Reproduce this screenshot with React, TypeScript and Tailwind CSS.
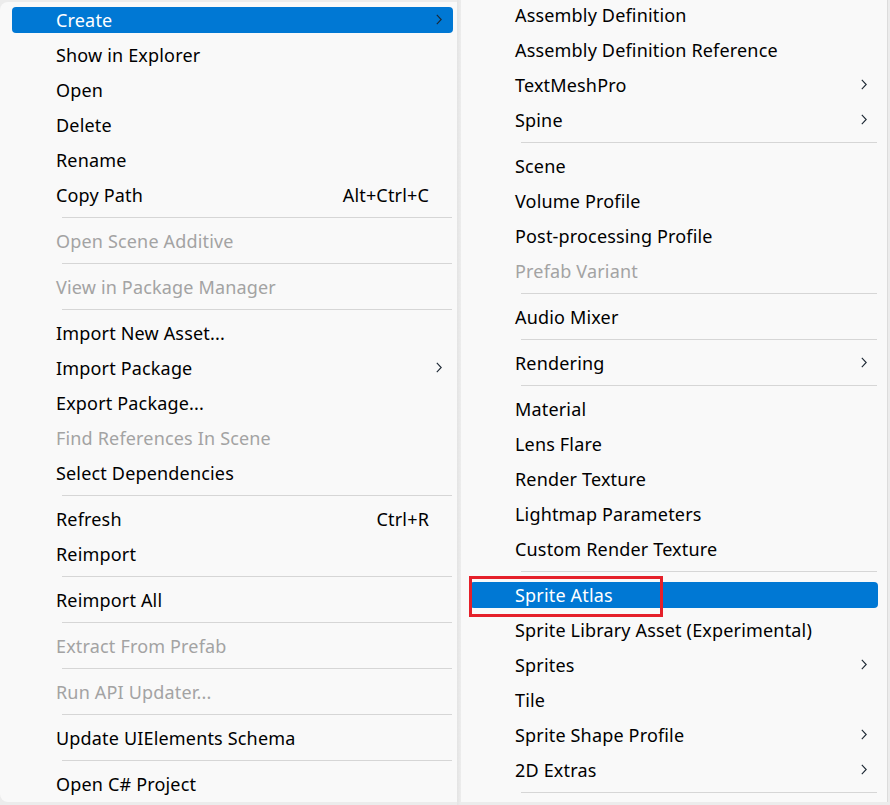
import React from "react";

type Item =
  | { sep: true }
  | { label: string; shortcut?: string; sub?: boolean; disabled?: boolean; hl?: boolean; sep?: false };

const leftItems: Item[] = [
  { label: "Create", sub: true, hl: true },
  { label: "Show in Explorer" },
  { label: "Open" },
  { label: "Delete" },
  { label: "Rename" },
  { label: "Copy Path", shortcut: "Alt+Ctrl+C" },
  { sep: true },
  { label: "Open Scene Additive", disabled: true },
  { sep: true },
  { label: "View in Package Manager", disabled: true },
  { sep: true },
  { label: "Import New Asset..." },
  { label: "Import Package", sub: true },
  { label: "Export Package..." },
  { label: "Find References In Scene", disabled: true },
  { label: "Select Dependencies" },
  { sep: true },
  { label: "Refresh", shortcut: "Ctrl+R" },
  { label: "Reimport" },
  { sep: true },
  { label: "Reimport All" },
  { sep: true },
  { label: "Extract From Prefab", disabled: true },
  { sep: true },
  { label: "Run API Updater...", disabled: true },
  { sep: true },
  { label: "Update UIElements Schema" },
  { sep: true },
  { label: "Open C# Project" },
];

const rightItems: Item[] = [
  { label: "Assembly Definition" },
  { label: "Assembly Definition Reference" },
  { label: "TextMeshPro", sub: true },
  { label: "Spine", sub: true },
  { sep: true },
  { label: "Scene" },
  { label: "Volume Profile" },
  { label: "Post-processing Profile" },
  { label: "Prefab Variant", disabled: true },
  { sep: true },
  { label: "Audio Mixer" },
  { sep: true },
  { label: "Rendering", sub: true },
  { sep: true },
  { label: "Material" },
  { label: "Lens Flare" },
  { label: "Render Texture" },
  { label: "Lightmap Parameters" },
  { label: "Custom Render Texture" },
  { sep: true },
  { label: "Sprite Atlas", hl: true },
  { label: "Sprite Library Asset (Experimental)" },
  { label: "Sprites", sub: true },
  { label: "Tile" },
  { label: "Sprite Shape Profile", sub: true },
  { label: "2D Extras", sub: true },
  { sep: true },
];

function Chevron() {
  return (
    <svg width="6" height="11" viewBox="0 0 6 11" className="shrink-0">
      <path d="M0.8 0.8 L5.2 5.5 L0.8 10.2" fill="none" stroke="#1c2733" strokeWidth="1.1" />
    </svg>
  );
}

function Menu({ items, side }: { items: Item[]; side: "left" | "right" }) {
  const left = side === "left";
  return (
    <div className="flex flex-col">
      {items.map((it, i) => {
        if (it.sep) {
          return (
            <div key={i} className={left ? "h-[11px] pt-[5px] pl-[62px] pr-[5px]" : "h-[11px] pt-[5px] pl-[60px] pr-[10px]"}>
              <div className="h-px bg-[#d6d6d6]" />
            </div>
          );
        }
        return (
          <div key={i} className={left ? "h-[35px] flex items-center pl-[12px] pr-[4px]" : "h-[35px] flex items-center pl-[9px] pr-[9px]"}>
            <div
              className={
                (it.hl ? "bg-[#0078d4] text-white rounded-[4px] " : "") +
                (left ? "flex-1 h-[26px] flex items-center pl-[44px] pr-[11px]" : "flex-1 h-[26px] flex items-center pl-[45px] pr-[11px]")
              }
            >
              <span className={"flex-1 whitespace-nowrap " + (it.disabled ? "text-[#a3a3a3]" : it.hl ? "text-white" : "text-black")}>
                {it.label}
              </span>
              {it.shortcut && <span className="mr-[13px] whitespace-nowrap text-black">{it.shortcut}</span>}
              {it.sub && <Chevron />}
            </div>
          </div>
        );
      })}
    </div>
  );
}

export default function App() {
  return (
    <div
      className="w-[890px] h-[805px] bg-[#ececec] relative overflow-hidden flex text-[18px] leading-none tracking-[0.17px]"
      style={{ fontFamily: '"Noto Sans", "Open Sans", sans-serif' }}
    >
      <div className="w-[457px] h-[800px] mt-[2px] bg-[#f9f9f9] rounded-tl-[8px] rounded-bl-[8px] shrink-0">
        <Menu items={leftItems} side="left" />
      </div>
      <div className="w-[4px] h-[805px] bg-gradient-to-r from-[#e4e4e4] to-[#ededed] shrink-0" />
      <div className="w-[427px] h-[805px] bg-[#f9f9f9] border-r border-[#dcdcdc] -mt-[3px] shrink-0">
        <Menu items={rightItems} side="right" />
      </div>
      <div className="absolute left-[469px] top-[576px] w-[194px] h-[41px] border-[3px] border-[#e5202a]" />
    </div>
  );
}
